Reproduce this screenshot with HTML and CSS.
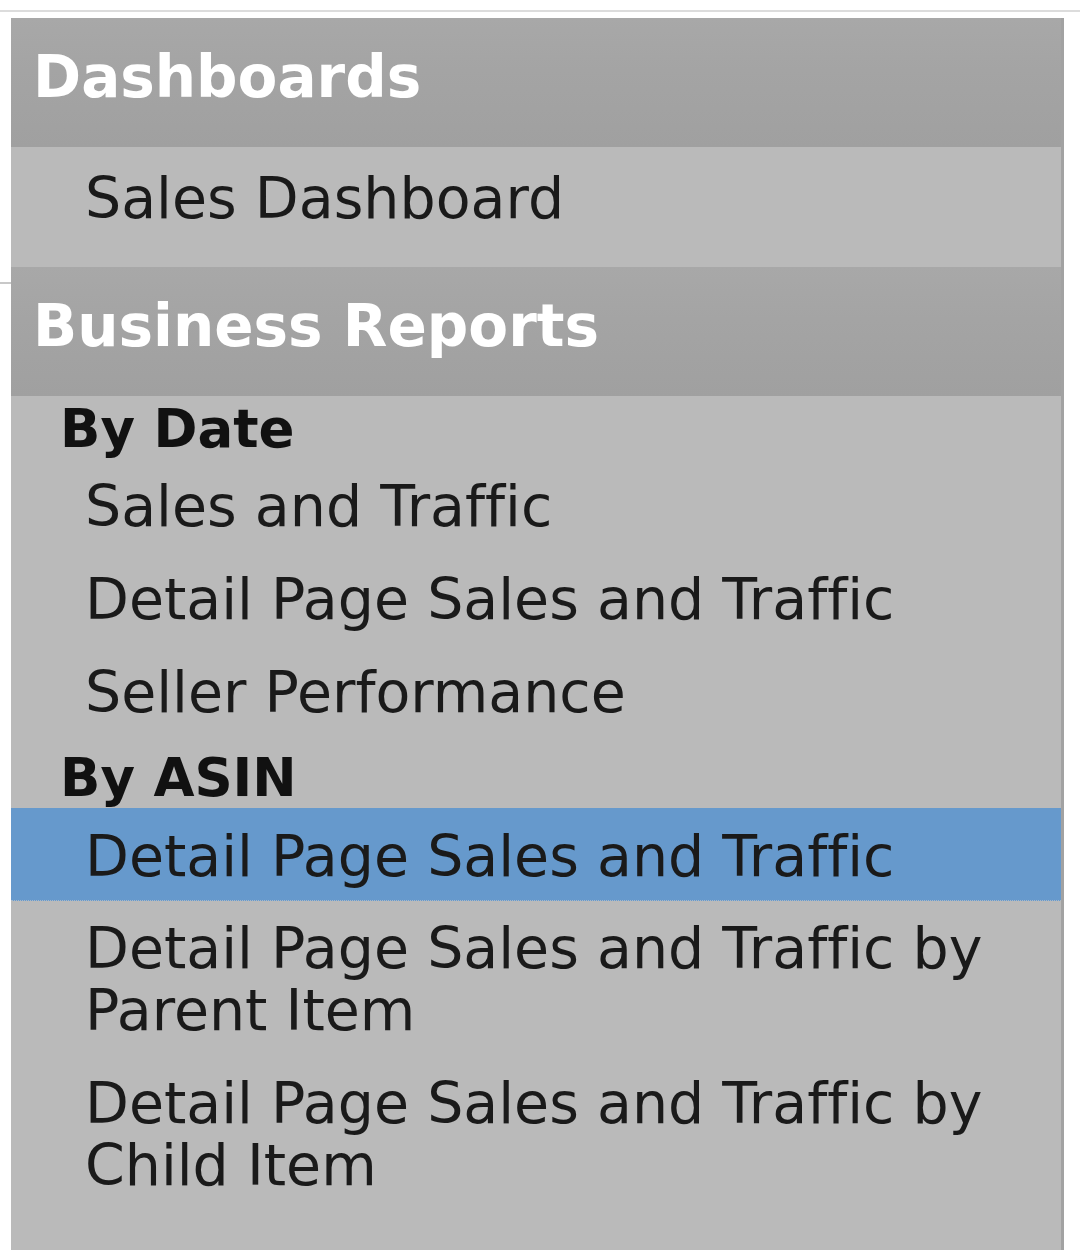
FILE: index.html
```html
<!DOCTYPE html>
<html lang="en">
  <head>
    <meta charset="UTF-8" />
    <meta name="viewport" content="width=device-width, initial-scale=1.0" />
    <title>Reports</title>
    <link rel="stylesheet" href="styles.css">
  </head>
  <body>
    <div class="topline"></div>
    <div class="page">
      <div class="gutter"></div>
      <nav class="sidebar">
        <div class="section">
          <div class="section-title">Dashboards</div>
          <div class="section-body first">
            <a class="item" href="#">Sales Dashboard</a>
          </div>
        </div>

        <div class="section">
          <div class="section-title">Business Reports</div>
          <div class="section-body">
            <div class="group">
              <div class="group-label">By Date</div>
              <a class="item" href="#">Sales and Traffic</a>
              <a class="item" href="#">Detail Page Sales and Traffic</a>
              <a class="item" href="#">Seller Performance</a>
            </div>
            <div class="group">
              <div class="group-label">By ASIN</div>
              <a class="item selected" href="#">Detail Page Sales and Traffic</a>
              <a class="item" href="#">Detail Page Sales and Traffic by Parent Item</a>
              <a class="item" href="#">Detail Page Sales and Traffic by Child Item</a>
            </div>
          </div>
        </div>
      </nav>
      <div class="content"></div>
    </div>
  </body>
</html>
```

FILE: styles.css
```css
body {
  margin: 0;
  padding: 0;
  background-color: #ffffff;
  font-family: "DejaVu Sans", Verdana, sans-serif;
  font-variant-ligatures: none;
  overflow: hidden;
}

.topline {
  height: 10px;
  border-bottom: 2px solid #dcdcdc;
}

.page {
  display: flex;
  padding-top: 6px;
}

.gutter {
  width: 11px;
  flex-shrink: 0;
  background: linear-gradient(#ffffff 264px, #c8c8c8 264px, #c8c8c8 266px, #ffffff 266px);
}

.sidebar {
  width: 1050px;
  flex-shrink: 0;
  background-color: #bababa;
  border-right: 3px solid #a2a2a2;
  height: 1232px;
}

.content {
  flex: 1;
  background-color: #ffffff;
}

.section-title {
  background: linear-gradient(#a8a8a8, #a4a4a4 40%, #a0a0a0);
  color: #ffffff;
  font-weight: bold;
  font-size: 58px;
  line-height: 118px;
  padding: 0 0 11px 22px;
}

.section-body.first {
  padding-bottom: 18px;
}

.section-body.first .item {
  padding: 0 0 0 74px;
  line-height: 102px;
}

.group-label {
  color: #111111;
  font-weight: bold;
  font-size: 53px;
  line-height: 60px;
  padding: 3px 0 0 49px;
}

.group + .group .group-label {
  padding-top: 10px;
}

.item {
  display: block;
  color: #1a1a1a;
  text-decoration: none;
  font-size: 57px;
  line-height: 62px;
  padding: 16px 40px 15px 74px;
}

.item.selected {
  padding-top: 17px;
  padding-bottom: 13px;
  background-color: #6699cc;
  border-bottom: 1px dotted #a8b8c8;
}
```
